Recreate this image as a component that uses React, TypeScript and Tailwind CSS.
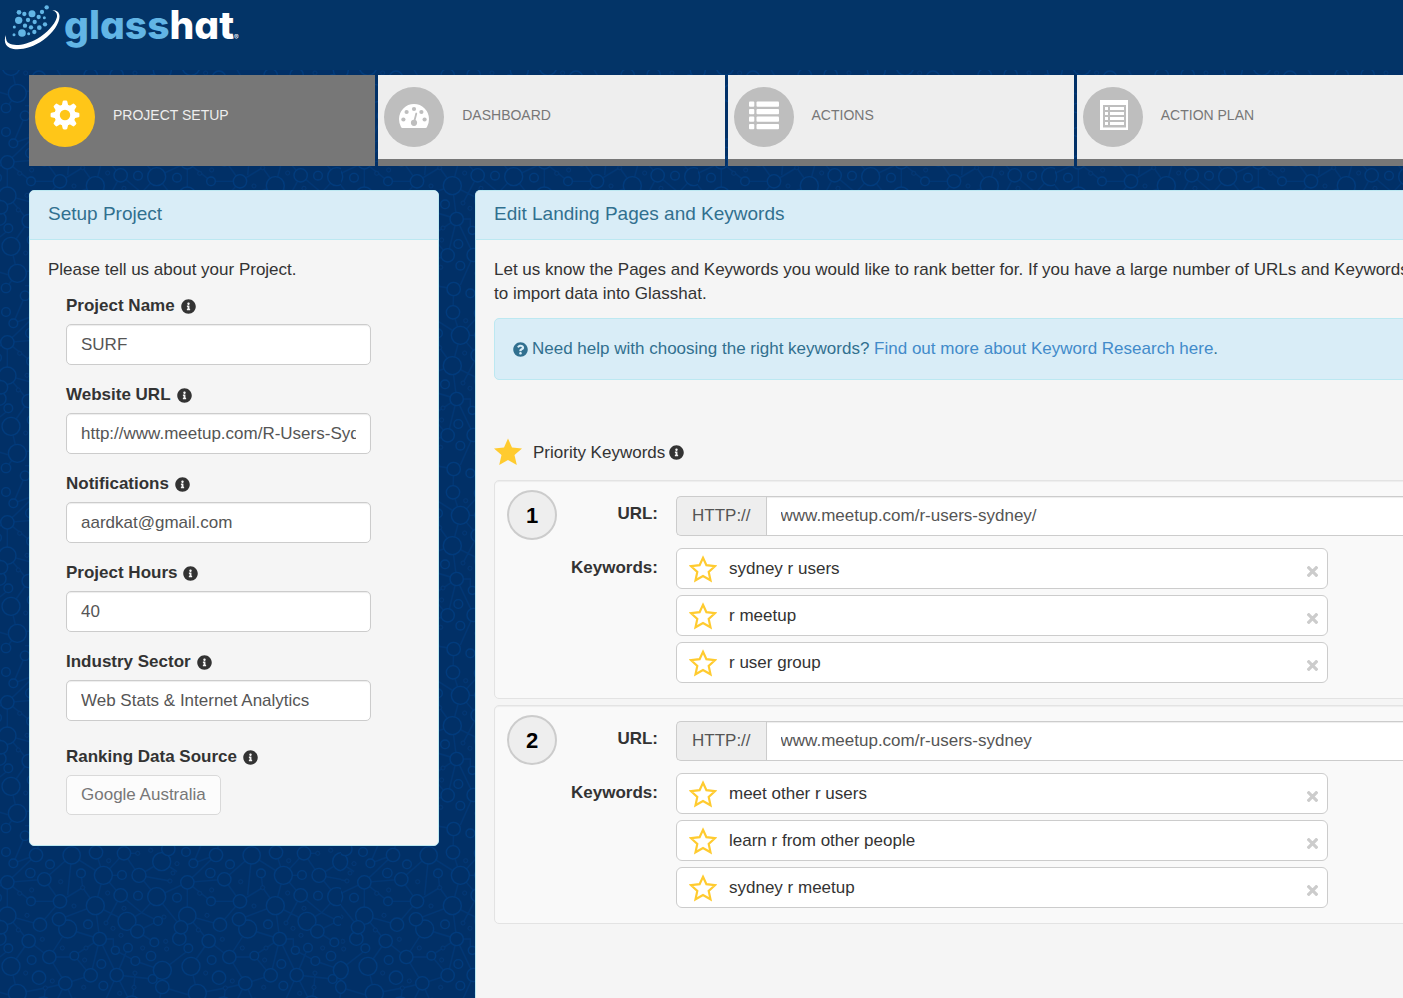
import { useId, type ReactNode } from "react";
import { FaInfoCircle, FaQuestionCircle } from "react-icons/fa";

/* ---------- background network pattern ---------- */

const NODES: number[][] = [
  [215, 31, 26], [288, 22, 20], [372, 25, 20], [108, 30, 20], [18, 21, 13], [40, 55, 13], [150, 58, 13], [91, 84, 14],
  [133, 103, 20], [22, 112, 20], [243, 85, 13], [310, 91, 27], [366, 90, 13], [417, 91, 21], [485, 50, 27], [505, 12, 20],
  [180, 169, 20], [93, 169, 13], [286, 182, 27], [362, 151, 20], [414, 152, 13], [470, 155, 27], [531, 158, 13],
  [22, 212, 26], [120, 239, 20], [203, 252, 27], [177, 223, 20], [264, 238, 13], [381, 229, 27], [412, 259, 20],
  [474, 228, 13], [3, 247, 20], [538, 281, 20], [86, 288, 20], [299, 282, 20], [346, 316, 12], [384, 308, 13],
  [463, 292, 13], [25, 310, 13], [148, 336, 20], [95, 345, 13], [223, 332, 13], [304, 357, 13], [453, 333, 14],
  [406, 348, 13], [33, 364, 27], [117, 398, 20], [272, 391, 20], [350, 390, 20], [487, 376, 27], [458, 402, 13],
  [487, 426, 20], [196, 415, 20], [310, 422, 13], [52, 445, 27], [18, 489, 14], [130, 482, 26], [225, 480, 20],
  [290, 492, 20], [395, 480, 27], [470, 498, 14], [175, 505, 13], [340, 505, 13], [75, 512, 14],
];

const DOTS: number[][] = [
  [182, 110], [95, 135], [248, 128], [323, 144], [222, 183], [372, 190], [81, 211], [55, 255], [127, 283], [187, 309],
  [258, 309], [254, 345], [318, 234], [339, 250], [363, 271], [428, 309], [497, 289], [500, 312], [405, 384],
  [402, 427], [157, 408], [77, 384], [251, 427], [59, 145], [510, 108], [519, 84], [531, 56], [413, 25], [326, 47],
  [492, 216], [136, 429], [359, 445], [452, 16],
];

const LINKS =
  "M215 31L133 103M215 31L203 150M215 31L310 91M288 22L310 91M310 91L372 25M372 25L417 91M310 91H366M310 91L286 182M22 112L108 30M22 112L133 103M133 103L180 169M93 169H180M93 169L22 112M22 112V212M180 169L120 239M248 128L180 169M248 128L286 182M243 85L248 128M286 182L299 282M286 182L177 223M286 182L381 229M362 151L310 91M362 151L425 203M362 151L318 234M470 155L425 203M425 203L381 229M425 203L474 228M470 155L562 112M470 155L545 247M470 155L417 91M485 50L505 12M485 50L417 91M485 50L531 80M474 228L412 259M22 212L120 239M22 212L86 288M203 252L299 282M203 252L148 336M299 282L223 332M299 282L272 391M299 282L350 390M299 282H340V316M86 288L33 364M86 288L148 336M148 336H223M148 336L196 415M223 332L272 391M196 415L148 510M272 391L196 415M350 390L458 402M350 390L384 308M346 316L406 348M406 348L487 376M405 384L402 427M487 376L573 310M487 376L458 402M33 364L52 445M52 445L136 429M196 415L136 429M52 445L18 489M350 390L310 480M350 390L395 480M402 427L395 480M487 426L470 498M487 426L600 460M225 480L196 415M225 480L290 492M130 482L136 429M130 482L108 570M215 571L225 480M290 492L288 562M395 480L372 565M470 498L505 552M75 512L40 595M130 482H75M395 480H470M412 259L463 292M108 30L40 55M372 25H413M417 91L510 108";

function NetworkBackdrop() {
  const id = useId();
  return (
    <svg className="absolute inset-0 h-full w-full" aria-hidden="true">
      <defs>
        <g id={`${id}t`} transform="scale(0.33333)" fill="#013067" stroke="#013b7d" strokeWidth="4">
          <path d={LINKS} fill="none" strokeOpacity="0.65" />
          {DOTS.map(([x, y]) => (
            <circle key={`${x}-${y}`} cx={x} cy={y} r="6" strokeOpacity="0.6" strokeWidth="3" />
          ))}
          {NODES.map(([x, y, r]) => (
            <circle key={`${x}-${y}`} cx={x} cy={y} r={r} />
          ))}
        </g>
        <pattern id={`${id}p`} x="-16" y="125" width="357" height="180" patternUnits="userSpaceOnUse">
          {[-164, 16, 196].map((x) => (
            <g key={x}>
              <use href={`#${id}t`} x={x} y="-180" />
              <use href={`#${id}t`} x={x} />
            </g>
          ))}
        </pattern>
      </defs>
      <rect width="100%" height="100%" fill={`url(#${id}p)`} />
    </svg>
  );
}

/* ---------- icons ---------- */

function LogoMark() {
  const dots: number[][] = [
    [140, 19, 6.5], [126, 33, 6.5], [96, 38, 10.5], [73, 39, 6.5], [57, 34, 7], [116, 48, 6.5], [133, 50, 4.5],
    [56, 58, 11], [84, 57, 6.5], [104, 63, 6.5], [75, 74, 6.5], [93, 79, 6.5], [118, 80, 7], [135, 70, 6.5],
    [43, 78, 4.5], [66, 96, 11.5], [42, 101, 4.5], [86, 98, 4.5], [103, 93, 6.5],
  ];
  return (
    <svg viewBox="12 9 168 138" className="h-[46px] w-[56px] shrink-0" aria-hidden="true">
      {dots.map(([x, y, r]) => (
        <circle key={`${x}-${y}`} cx={x} cy={y} r={r} fill="#62b5e5" />
      ))}
      <path
        fill="#fff"
        d="M18 102C11 116 14 134 30 141C52 150 94 143 130 117C162 94 182 62 178 41C176 32 168 27 157 28C168 31 174 39 170 51C163 72 141 96 112 113C78 132 43 137 27 127C19 122 17 113 18 102Z"
      />
    </svg>
  );
}

function GearIcon() {
  return (
    <svg viewBox="-15 -15 30 30" className="size-[30px]" fill="#fff" aria-hidden="true">
      {[0, 45, 90, 135, 180, 225, 270, 315].map((a) => (
        <path key={a} transform={`rotate(${a})`} d="M-3.6 -8L-2.3 -13.6Q-2 -14.4 -1.2 -14.4H1.2Q2 -14.4 2.3 -13.6L3.6 -8Z" />
      ))}
      <path fillRule="evenodd" d="M0 -10.6A10.6 10.6 0 1 1 0 10.6A10.6 10.6 0 1 1 0 -10.6ZM0 -5.2A5.2 5.2 0 1 0 0 5.2A5.2 5.2 0 1 0 0 -5.2Z" />
    </svg>
  );
}

function GaugeIcon() {
  return (
    <svg viewBox="0 0 30 30" className="size-[30px]" aria-hidden="true">
      <path fill="#fff" d="M15 4A15 15 0 0 1 30 19Q30 23.4 28 27Q27.5 28 26.5 28H3.5Q2.5 28 2 27Q0 23.4 0 19A15 15 0 0 1 15 4Z" />
      <g fill="#bebebe">
        <circle cx="15" cy="9" r="2.1" />
        <circle cx="7.6" cy="12" r="2.1" />
        <circle cx="22.4" cy="12" r="2.1" />
        <circle cx="4.4" cy="19.5" r="2.1" />
        <circle cx="25.6" cy="19.5" r="2.1" />
        <circle cx="15" cy="22.8" r="3.1" />
      </g>
      <path d="M15 22.5L17.3 13.5" stroke="#bebebe" strokeWidth="1.8" strokeLinecap="round" />
    </svg>
  );
}

function ListIcon() {
  return (
    <svg viewBox="0 0 30 30" className="size-[30px]" fill="#fff" aria-hidden="true">
      {[1.5, 9, 16.5, 24].map((y) => (
        <g key={y}>
          <rect x="0" y={y} width="5.3" height="5.3" rx="1" />
          <rect x="7.5" y={y} width="22.5" height="5.3" rx="1" />
        </g>
      ))}
    </svg>
  );
}

function ListAltIcon() {
  return (
    <svg viewBox="0 0 30 30" className="size-[30px]" aria-hidden="true">
      <path fill="#fff" d="M2 0H30V30H2Z" />
      <path fill="#bebebe" d="M5 5H28V27.5H5Z" />
      {[7, 12, 17, 22].map((y) => (
        <path key={y} fill="#fff" d={`M7 ${y}h3v3h-3zM12 ${y}h14v3h-14z`} />
      ))}
    </svg>
  );
}

function StarIcon({ filled = false }: { filled?: boolean }) {
  return (
    <svg viewBox="0 0 28 28" className="size-7 shrink-0" aria-hidden="true">
      {filled ? (
        <path fill="#ffcb2f" d="M14 0.5L18 9.5L28 10.5L20.5 17L22.8 27L14 22L5.2 27L7.5 17L0 10.5L10 9.5Z" />
      ) : (
        <path
          fill="#fff"
          stroke="#ffcb2f"
          strokeWidth="2.2"
          d="M14 2.8L17.4 10.2L26 11.2L19.7 16.9L21.5 25.3L14 21.1L6.5 25.3L8.3 16.9L2 11.2L10.6 10.2Z"
        />
      )}
    </svg>
  );
}

function CloseIcon() {
  return (
    <svg viewBox="0 0 11 11" className="size-[11px]" aria-hidden="true">
      <path d="M1.8 1.8L9.2 9.2M9.2 1.8L1.8 9.2" stroke="#ccc" strokeWidth="3.2" strokeLinecap="square" />
    </svg>
  );
}

/* ---------- navigation ---------- */

function NavTab({ icon, label, active = false }: { icon: ReactNode; label: string; active?: boolean }) {
  return (
    <a
      href="#"
      className={
        active
          ? "flex h-[91px] items-start border-b-[7px] border-[#777] bg-[#777] pt-3 pl-1.5 text-[#eee]"
          : "flex h-[91px] items-start border-b-[7px] border-[#777] bg-[#eee] pt-3 pl-1.5 text-[#777]"
      }
    >
      <span
        className={
          active
            ? "flex size-[60px] items-center justify-center rounded-full bg-[#ffc618] pb-1"
            : "flex size-[60px] items-center justify-center rounded-full bg-[#bebebe] pb-1"
        }
      >
        {icon}
      </span>
      <span className="ml-[18px] pt-4 text-[14px] leading-6">{label}</span>
    </a>
  );
}

/* ---------- panels ---------- */

function Panel({ title, className, children }: { title: string; className: string; children: ReactNode }) {
  return (
    <section className={`border border-[#bce8f1] bg-[#f5f5f5] ${className}`}>
      <h2 className="h-[49px] rounded-t-[4px] border-b border-[#bce8f1] bg-[#d9edf7] px-[18px] pt-[11px] text-[19px] leading-6 text-[#31708f]">
        {title}
      </h2>
      {children}
    </section>
  );
}

function Field({ id, label, value }: { id: string; label: string; value: string }) {
  return (
    <div className="mb-[18px]">
      <label htmlFor={id} className="mb-1.5 flex h-6 items-center font-bold">
        {label}
        <FaInfoCircle className="ml-1.5 size-[15px]" />
      </label>
      <input
        id={id}
        type="text"
        defaultValue={value}
        className="h-[41px] w-full rounded-[5px] border border-[#ccc] bg-white px-3.5 text-[#555] shadow-[inset_0_1px_1px_rgba(0,0,0,0.075)]"
      />
    </div>
  );
}

function KeywordGroup({ index, url, keywords }: { index: number; url: string; keywords: string[] }) {
  return (
    <section className="mb-1.5 grid grid-cols-[50px_101px_1fr] rounded-[5px] border border-[#e3e3e3] bg-[#f9f9f9] py-[15px] pl-3 shadow-[inset_0_1px_1px_rgba(0,0,0,0.05)]">
      <div className="-my-1.5 flex size-[50px] items-center justify-center self-start rounded-full border-2 border-[#ccc] bg-[#eee] text-[22px] font-bold text-black">
        {index}
      </div>
      <label htmlFor={`url-${index}`} className="pt-1.5 text-right leading-6 font-bold">
        URL:
      </label>
      <div className="ml-[18px] flex h-10">
        <span className="flex items-center rounded-l-[5px] border border-r-0 border-[#ccc] bg-[#eee] px-[15px] text-[#555]">
          HTTP://
        </span>
        <input
          id={`url-${index}`}
          type="text"
          defaultValue={url}
          className="min-w-0 flex-1 border border-[#ccc] bg-white px-3.5 text-[#555] shadow-[inset_0_1px_1px_rgba(0,0,0,0.075)]"
        />
      </div>
      <h3 className="col-start-2 pt-5 text-right leading-6 font-bold">Keywords:</h3>
      <ul className="mt-3 mr-[85px] ml-[18px] flex flex-col gap-1.5">
        {keywords.map((k) => (
          <li key={k} className="flex h-[41px] items-center rounded-[6px] border border-[#ccc] bg-white px-3">
            <button type="button" aria-label={`Prioritise ${k}`}>
              <StarIcon />
            </button>
            <span className="ml-3 flex-1">{k}</span>
            <button type="button" aria-label={`Remove ${k}`} className="-mr-[3px] pt-1.5">
              <CloseIcon />
            </button>
          </li>
        ))}
      </ul>
    </section>
  );
}

export default function App() {
  return (
    <div className="relative min-h-screen overflow-hidden bg-[#013067] font-['Liberation_Sans',Arial,sans-serif] text-[17px] text-[#333]">
      <NetworkBackdrop />
      <div className="relative flex min-h-screen min-w-[1452px] flex-col">
        <header className="flex h-[70px] items-start bg-[#033467] pt-1 pl-1">
          <LogoMark />
          <a
            href="#"
            className="-mt-1 ml-1 flex items-end font-['Inter',sans-serif] text-[39px] leading-[50px] font-extrabold text-white [font-feature-settings:'cv11']"
          >
            <span className="text-[#62b5e5]">glass</span>hat
            <span className="pb-1.5 text-[7px] leading-3 font-normal">®</span>
          </a>
        </header>

        <nav className="mt-[5px] grid grid-cols-4 gap-[3px] px-[29px]">
          <NavTab icon={<GearIcon />} label="PROJECT SETUP" active />
          <NavTab icon={<GaugeIcon />} label="DASHBOARD" />
          <NavTab icon={<ListIcon />} label="ACTIONS" />
          <NavTab icon={<ListAltIcon />} label="ACTION PLAN" />
        </nav>

        <main className="mt-6 flex flex-1 items-stretch gap-9 px-[29px]">
          <Panel title="Setup Project" className="w-[410px] shrink-0 self-start rounded-[5px]">
            <div className="px-[18px] pt-[18px] pb-[30px]">
              <p className="leading-6">Please tell us about your Project.</p>
              <form className="mt-3 px-[18px]">
                <div className="w-[305px]">
                  <Field id="name" label="Project Name" value="SURF" />
                  <Field id="site" label="Website URL" value="http://www.meetup.com/R-Users-Sydney" />
                  <Field id="mail" label="Notifications" value="aardkat@gmail.com" />
                  <Field id="hours" label="Project Hours" value="40" />
                  <Field id="sector" label="Industry Sector" value="Web Stats & Internet Analytics" />
                </div>
                <label htmlFor="source" className="mt-6 mb-1.5 flex h-6 items-center font-bold">
                  Ranking Data Source
                  <FaInfoCircle className="ml-1.5 size-[15px]" />
                </label>
                <button
                  id="source"
                  type="button"
                  className="h-10 rounded-[5px] border border-[#d9d9d9] bg-[#fcfcfc] px-3.5 text-[#777]"
                >
                  Google Australia
                </button>
              </form>
            </div>
          </Panel>

          <Panel title="Edit Landing Pages and Keywords" className="min-w-0 flex-1 rounded-t-[5px] border-b-0">
            <div className="pt-[18px] pr-2 pl-[18px]">
              <p className="leading-6 whitespace-nowrap">
                Let us know the Pages and Keywords you would like to rank better for. If you have a large number of URLs and Keywords, p
                <br />
                to import data into Glasshat.
              </p>
              <div className="mt-3 flex h-[62px] items-center rounded-[5px] border border-[#bce8f1] bg-[#d9edf7] px-[18px] text-[#31708f]">
                <FaQuestionCircle className="mr-1 size-[15px]" />
                <p>
                  Need help with choosing the right keywords?{" "}
                  <a href="#" className="text-[#428bca]">
                    Find out more about Keyword Research here
                  </a>
                  .
                </p>
              </div>
              <h3 className="mt-[58px] mb-3.5 flex h-7 items-center">
                <StarIcon filled />
                <span className="ml-[11px] pt-0.5">Priority Keywords</span>
                <FaInfoCircle className="ml-1 size-[15px]" />
              </h3>
              <KeywordGroup
                index={1}
                url="www.meetup.com/r-users-sydney/"
                keywords={["sydney r users", "r meetup", "r user group"]}
              />
              <KeywordGroup
                index={2}
                url="www.meetup.com/r-users-sydney"
                keywords={["meet other r users", "learn r from other people", "sydney r meetup"]}
              />
            </div>
          </Panel>
        </main>
      </div>
    </div>
  );
}
